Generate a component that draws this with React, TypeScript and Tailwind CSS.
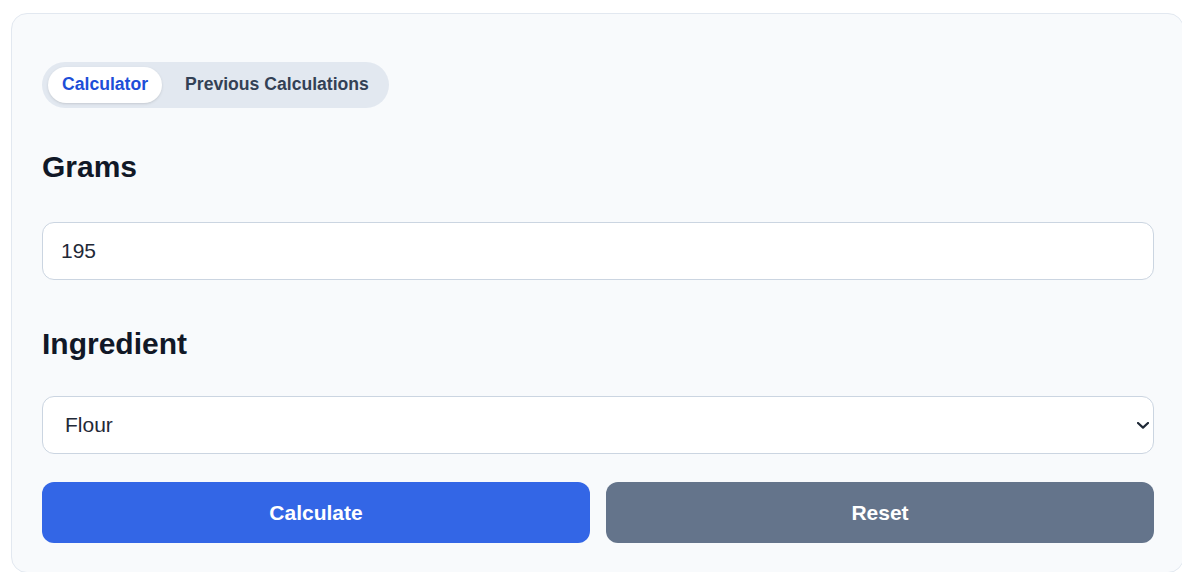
import { useState } from "react"

const ingredients = ["Flour", "Sugar", "Butter", "Milk", "Rice"]

function Tabs({ active, onChange }: { active: string; onChange: (t: string) => void }) {
  const tabs = ["Calculator", "Previous Calculations"]
  return (
    <div className="inline-flex items-center gap-[9px] rounded-full bg-[#e2e8f0] px-[6px] py-[5px]">
      {tabs.map((t) => (
        <button
          key={t}
          onClick={() => onChange(t)}
          className={
            t === active
              ? "h-[36px] rounded-full bg-white px-[14px] text-[17.6px] leading-none font-bold text-[#1d4ed8] shadow-sm"
              : "h-[36px] rounded-full px-[14px] text-[17.6px] leading-none font-bold text-[#334155]"
          }
        >
          {t}
        </button>
      ))}
    </div>
  )
}

export default function App() {
  const [tab, setTab] = useState("Calculator")
  const [grams, setGrams] = useState("195")
  const [ingredient, setIngredient] = useState("Flour")

  return (
    <div className="min-h-screen overflow-hidden bg-white font-['Liberation_Sans',Arial,sans-serif]">
      <div className="ml-[11px] mt-[13px] w-[1173px] rounded-[16px] border border-[#e2e8f0] bg-[#f8fafc] px-[30px] pb-[29px] pt-[48px]">
        <Tabs active={tab} onChange={setTab} />

        <h2 className="mt-[43px] text-[30px] leading-[32px] font-bold text-[#111827]">Grams</h2>
        <input
          value={grams}
          onChange={(e) => setGrams(e.target.value)}
          className="mt-[39px] block h-[58px] w-[1112px] rounded-[12px] border border-[#cbd5e1] bg-white px-[18px] text-[21px] text-[#1f2937] outline-none"
        />

        <h2 className="mt-[48px] text-[30px] leading-[32px] font-bold text-[#111827]">Ingredient</h2>
        <div className="relative mt-[36px] w-[1112px]">
          <select
            value={ingredient}
            onChange={(e) => setIngredient(e.target.value)}
            className="block h-[58px] w-full appearance-none rounded-[12px] border border-[#cbd5e1] bg-white px-[22px] text-[21px] text-[#1f2937] outline-none"
          >
            {ingredients.map((i) => (
              <option key={i}>{i}</option>
            ))}
          </select>
          {/* dropdown chevron */}
          <svg
            className="pointer-events-none absolute right-[5px] top-[26px]"
            width="12"
            height="7"
            viewBox="0 0 12 7"
            fill="none"
          >
            <path d="M1 1l5 4.6L11 1" stroke="#1f2937" strokeWidth="2.2" strokeLinecap="round" strokeLinejoin="round" />
          </svg>
        </div>

        <div className="mt-[28px] grid w-[1112px] grid-cols-2 gap-4">
          <button className="h-[61px] rounded-[12px] bg-[#3366e6] text-[21px] font-bold text-white">
            Calculate
          </button>
          <button
            onClick={() => setGrams("")}
            className="h-[61px] rounded-[12px] bg-[#64748b] text-[21px] font-bold text-white"
          >
            Reset
          </button>
        </div>
      </div>
    </div>
  )
}
